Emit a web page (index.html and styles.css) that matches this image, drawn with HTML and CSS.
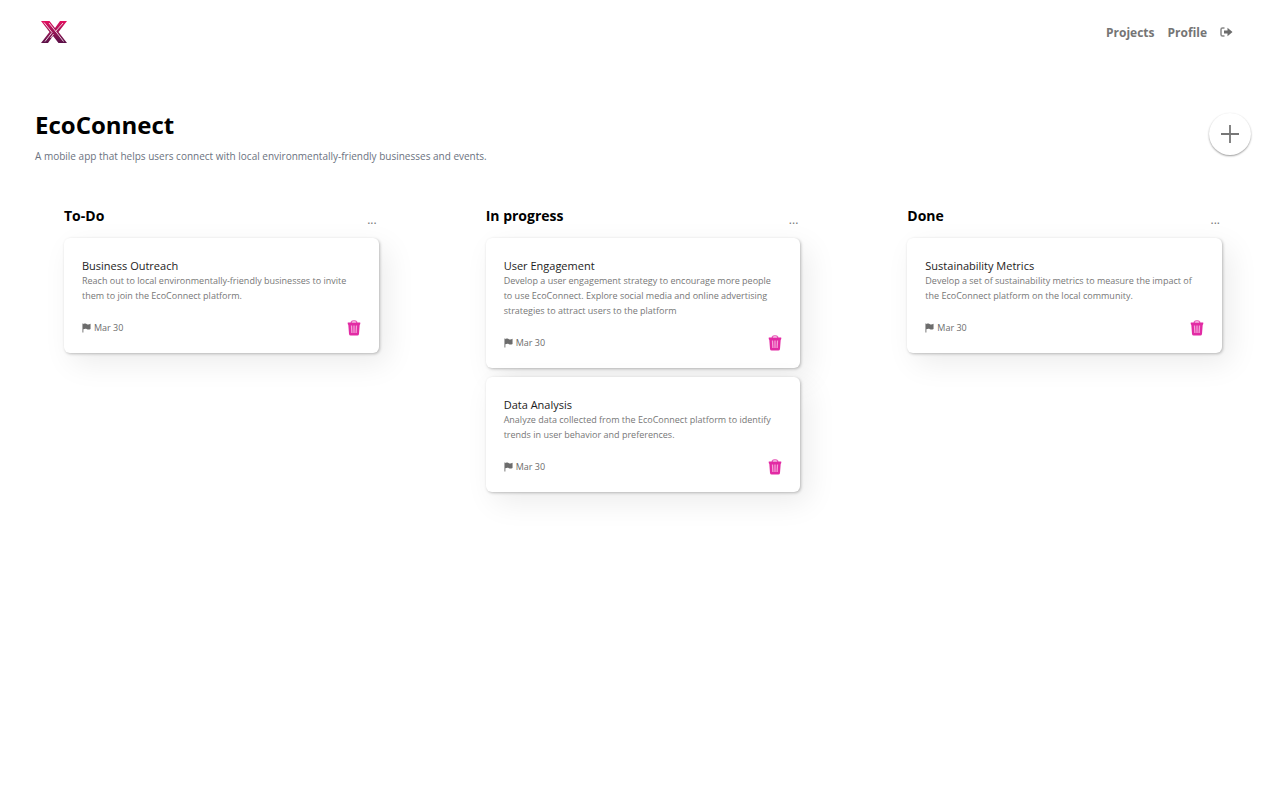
FILE: index.html
```html
<!DOCTYPE html>
<html lang="en">
<head>
<meta charset="utf-8">
<meta name="viewport" content="width=device-width, initial-scale=1">
<title>EcoConnect</title>
<link rel="stylesheet" href="styles.css">
</head>
<body>
<svg class="sprite" aria-hidden="true">
  <symbol id="flag" viewBox="0 0 10 11"><path d="M0.500 0.500h1V1.200C3.500 0.300 4.500 0.600 5.500 1.200C7 1.900 8 1.400 9.500 0.800V6.500C8 7.300 7 7.500 5.500 6.800C4 6.100 3 6.300 1.500 7V10.500h-1z" fill="#6c6c6c"/></symbol>
  <symbol id="trash" viewBox="0 0 14 16"><path d="M4.300 3V2Q4.800 0.800 6 0.800H8Q9.200 0.800 9.700 2V3" fill="none" stroke="#e95dbb" stroke-width="1.300"/><path d="M1 2.500H13Q13.500 2.500 13.300 3.500L13 4.800H12.700L12 14Q11.800 15.500 10.300 15.500H3.700Q2.200 15.500 2 14L1.300 4.800H1L0.700 3.500Q0.500 2.500 1 2.500z" fill="#e22ba4"/><path d="M4.500 5.500L4.900 13M7 5.500V13M9.500 5.500L9.100 13" stroke="#f5a0d8" stroke-width="1.300"/></symbol>
</svg>
<header class="topbar">
  <a class="logo" href="#" aria-label="Home">
    <svg width="28" height="24" viewBox="0 0 28 24" fill="none">
      <defs><linearGradient id="ink" x1="0" y1="0" x2="0" y2="1"><stop offset="0" stop-color="#e5105f"/><stop offset="0.500" stop-color="#981655"/><stop offset="1" stop-color="#5a1048"/></linearGradient></defs>
      <path d="M1 1H9.500L15 8L20 1H27L18.500 12L27 23H18.500L13 16L8 23H1L9.500 12Z" fill="url(#ink)"/>
      <path d="M4 2.500L12 12.500L5 21.500M9 3L17 13L23.500 21.500M23 3L15.500 11.500M10.500 18L13.500 14" stroke="#fff" stroke-width="0.800"/>
    </svg>
  </a>
  <nav class="nav">
    <a href="#">Projects</a>
    <a href="#">Profile</a>
    <a href="#" class="logout" aria-label="Log out"><svg width="13" height="11" viewBox="0 0 13 11"><path d="M4.500 1H2.500Q1 1 1 2.500V7.500Q1 9 2.500 9H4.500" fill="none" stroke="#888" stroke-width="1.500"/><path d="M4 3.500H7.500V0.800L12.500 5L7.500 9.200V6.500H4z" fill="#6c6c6c"/></svg></a>
  </nav>
</header>
<main>
  <section class="intro">
    <div>
      <h1>EcoConnect</h1>
      <p>A mobile app that helps users connect with local environmentally-friendly businesses and events.</p>
    </div>
    <button class="add" type="button" aria-label="Add task"><svg width="20" height="20" viewBox="0 0 20 20"><path d="M10 1V19M1 10H19" stroke="#777" stroke-width="1.800"/></svg></button>
  </section>
  <div class="board">
    <section class="column">
      <header><h2>To-Do</h2><button class="more" type="button">...</button></header>
      <article class="card">
        <h3>Business Outreach</h3>
        <p>Reach out to local environmentally-friendly businesses to invite them to join the EcoConnect platform.</p>
        <footer><span class="due"><svg width="9" height="10"><use href="#flag"/></svg>Mar 30</span><button class="delete" type="button" aria-label="Delete"><svg width="14" height="16"><use href="#trash"/></svg></button></footer>
      </article>
    </section>
    <section class="column">
      <header><h2>In progress</h2><button class="more" type="button">...</button></header>
      <article class="card">
        <h3>User Engagement</h3>
        <p>Develop a user engagement strategy to encourage more people to use EcoConnect. Explore social media and online advertising strategies to attract users to the platform</p>
        <footer><span class="due"><svg width="9" height="10"><use href="#flag"/></svg>Mar 30</span><button class="delete" type="button" aria-label="Delete"><svg width="14" height="16"><use href="#trash"/></svg></button></footer>
      </article>
      <article class="card">
        <h3>Data Analysis</h3>
        <p>Analyze data collected from the EcoConnect platform to identify trends in user behavior and preferences.</p>
        <footer><span class="due"><svg width="9" height="10"><use href="#flag"/></svg>Mar 30</span><button class="delete" type="button" aria-label="Delete"><svg width="14" height="16"><use href="#trash"/></svg></button></footer>
      </article>
    </section>
    <section class="column">
      <header><h2>Done</h2><button class="more" type="button">...</button></header>
      <article class="card">
        <h3>Sustainability Metrics</h3>
        <p>Develop a set of sustainability metrics to measure the impact of the EcoConnect platform on the local community.</p>
        <footer><span class="due"><svg width="9" height="10"><use href="#flag"/></svg>Mar 30</span><button class="delete" type="button" aria-label="Delete"><svg width="14" height="16"><use href="#trash"/></svg></button></footer>
      </article>
    </section>
  </div>
</main>
</body>
</html>
```
FILE: styles.css
```css
* { box-sizing: border-box; margin: 0; padding: 0; }
body { background: #fff; color: #000; font-family: "Segoe UI", "Open Sans", "Noto Sans", sans-serif; }
svg { display: block; }
button { border: 0; background: none; font: inherit; cursor: pointer; }
a { color: inherit; text-decoration: none; }
.sprite { position: absolute; width: 0; height: 0; }
.topbar { display: flex; align-items: center; justify-content: space-between; height: 64px; padding: 0 47px 0 40px; }
.nav { display: flex; align-items: center; gap: 13px; color: #757575; font-size: 12px; font-weight: 700; }
.intro { display: flex; align-items: flex-start; justify-content: space-between; padding: 44px 29px 0 35px; }
.intro h1 { font-size: 24px; line-height: 34px; font-weight: 700; }
.intro p { margin-top: 6px; font-size: 10px; line-height: 16px; color: #6b7280; }
.add { display: grid; place-items: center; width: 42px; height: 42px; margin-top: 5px; border-radius: 50%; background: #fff; box-shadow: 0 1px 2px rgba(0, 0, 0, 0.4); }
.board { display: grid; grid-template-columns: repeat(3, minmax(0, 1fr)); align-items: start; gap: 107px; padding: 40px 58px 40px 64px; }
.column { display: grid; gap: 9px; }
.column > header { display: flex; align-items: flex-start; justify-content: space-between; height: 25px; }
.column h2 { font-size: 14px; line-height: 24px; font-weight: 700; }
.more { padding: 8px 2px 0 0; font-size: 12px; line-height: 16px; color: #777; }
.card { padding: 20px 18px 17px; border-radius: 6px; background: #fff; box-shadow: 1px 1px 3px rgba(0, 0, 0, 0.25), 8px 10px 30px rgba(0, 0, 0, 0.08); }
.card h3 { font-size: 11px; line-height: 15px; font-weight: 400; color: #1c1c1c; }
.card p { padding-right: 2px; font-size: 9px; line-height: 15px; color: #777; }
.card footer { display: flex; align-items: center; justify-content: space-between; margin-top: 17px; }
.due { display: flex; align-items: center; gap: 3px; font-size: 9px; line-height: 16px; color: #6c6c6c; }
```
